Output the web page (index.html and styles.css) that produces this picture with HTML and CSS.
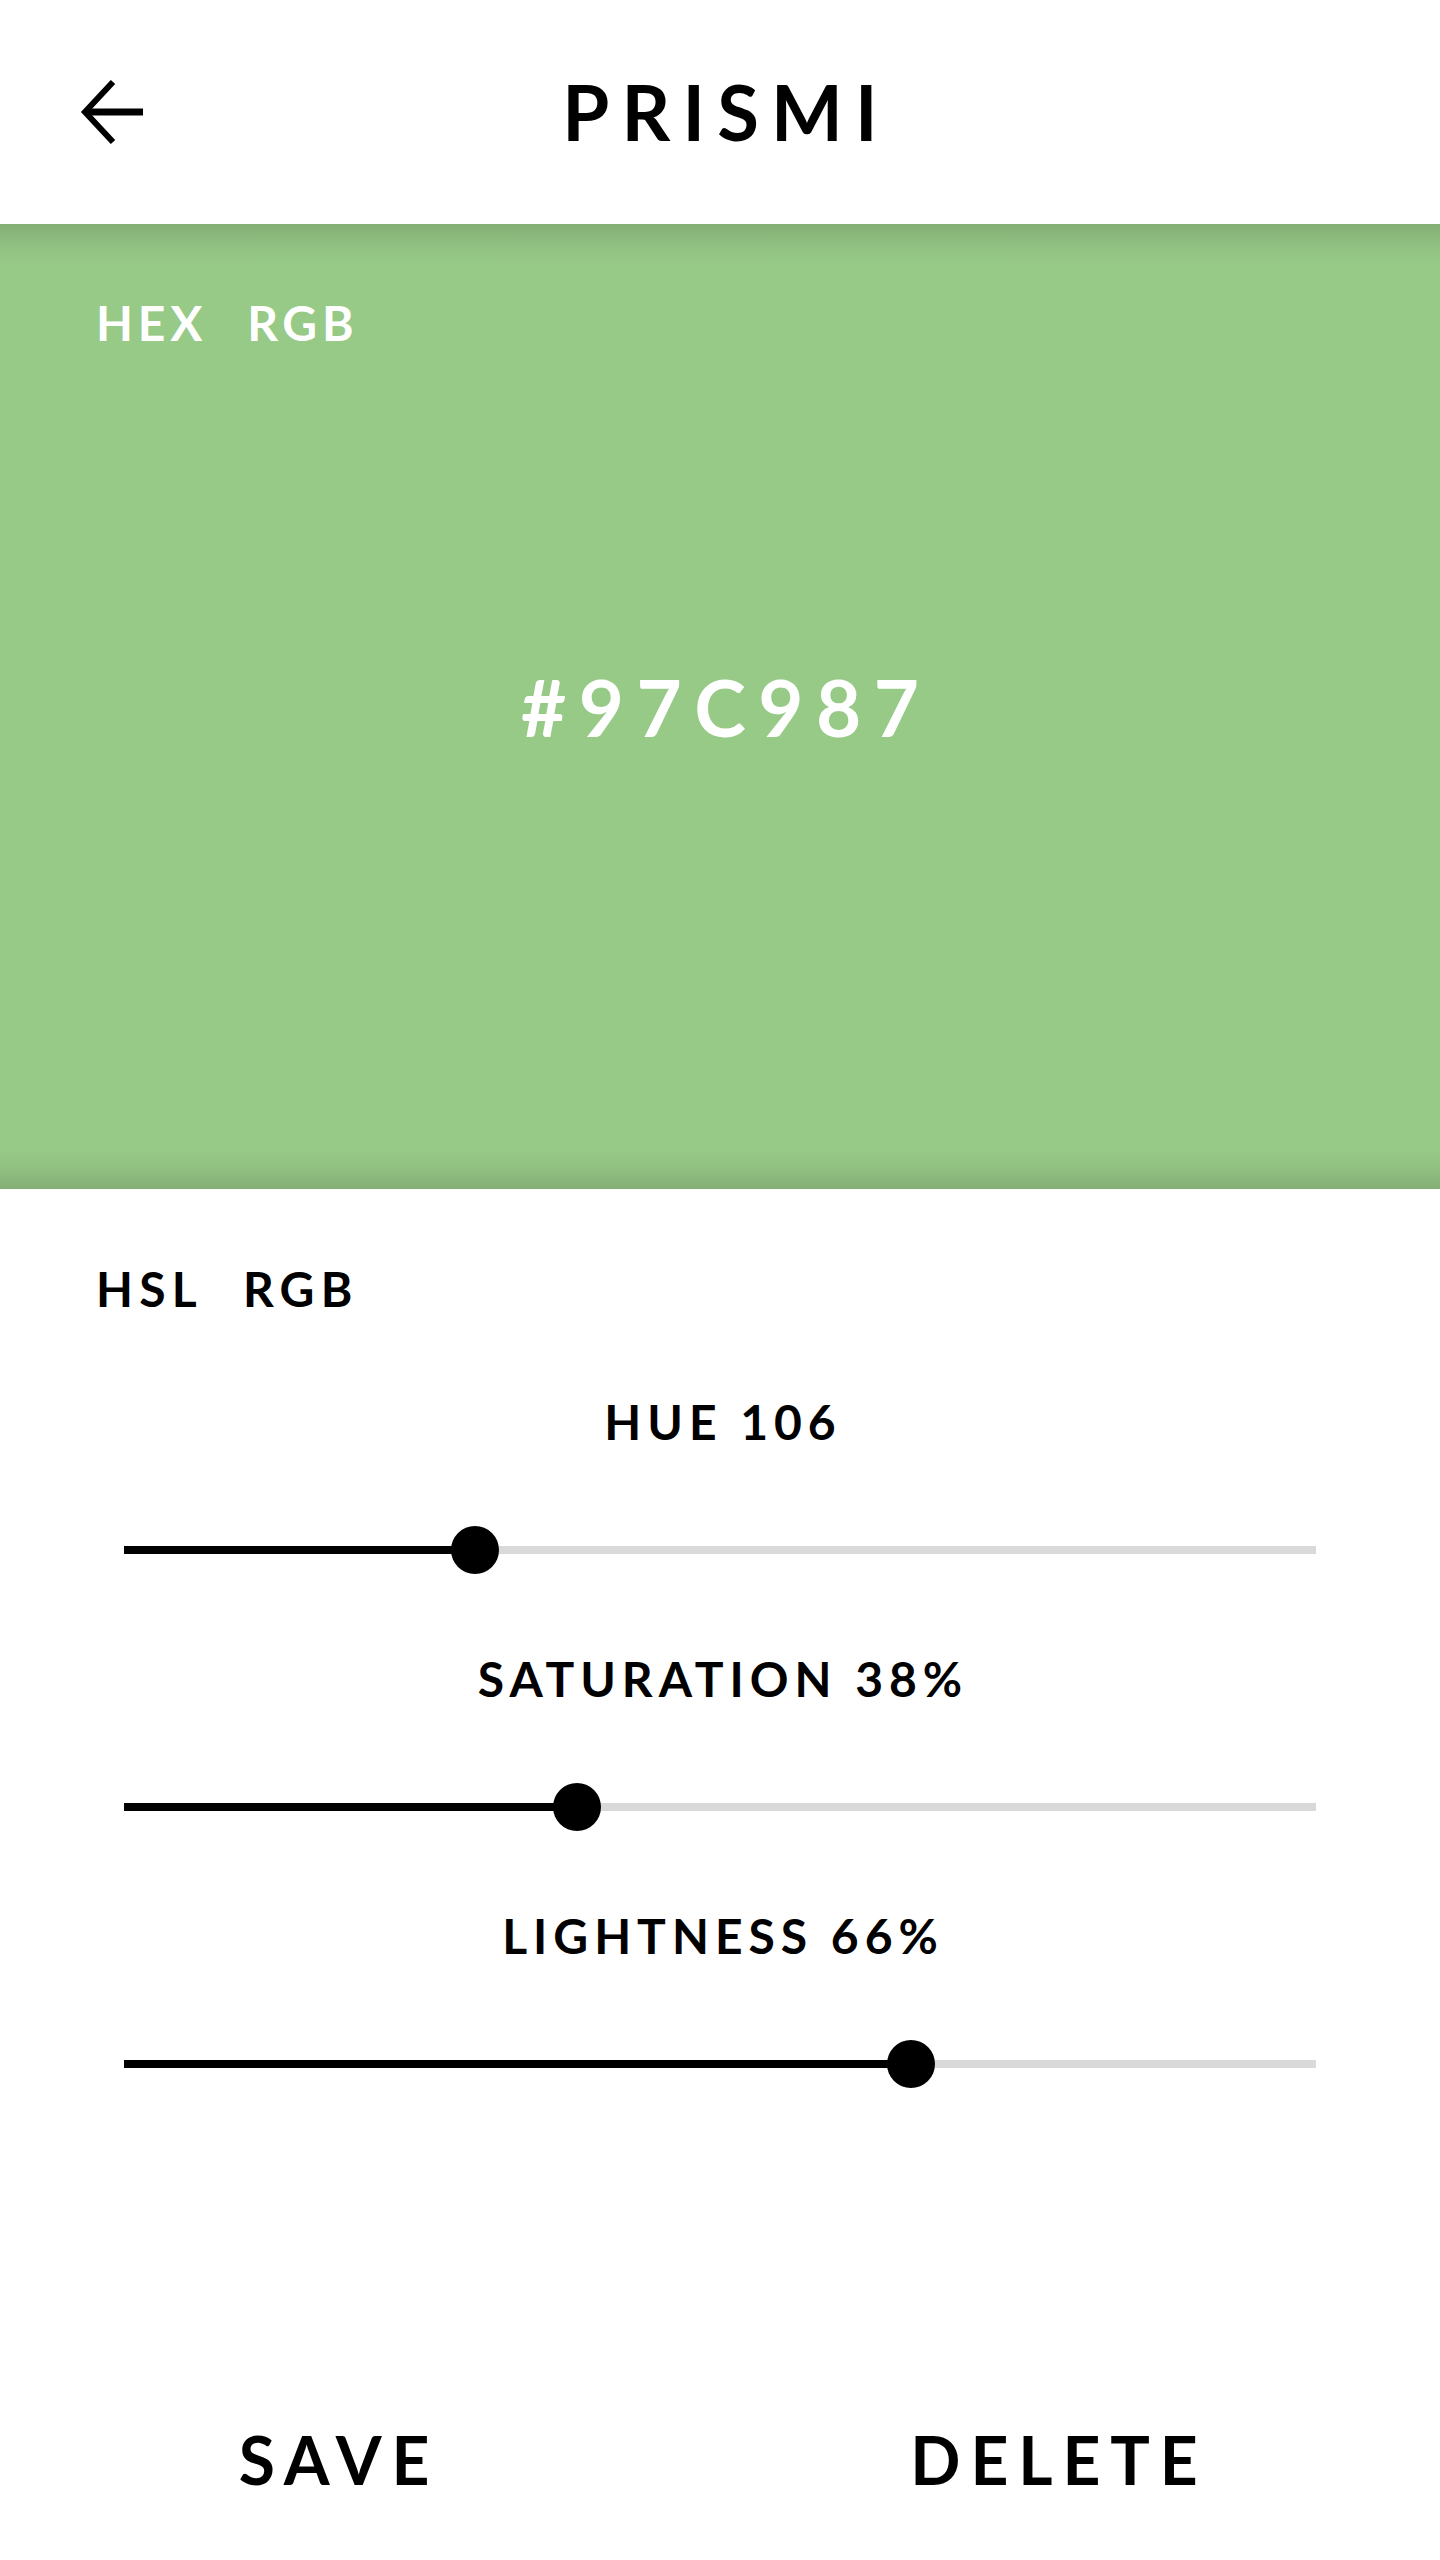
FILE: index.html
```html
<!DOCTYPE html>
<html lang="en">
<head>
<meta charset="utf-8">
<title>Prismi</title>
<link rel="stylesheet" href="styles.css">
</head>
<body>
<div class="app">
  <header class="topbar">
    <button class="back" aria-label="Back">
      <svg width="64" height="64" viewBox="0 0 64 64" fill="none" stroke="#000" stroke-width="7">
        <path d="M63 32 H6" />
        <path d="M33 2 L5 32 L33 62" stroke-width="6" />
      </svg>
    </button>
    <h1 class="title">PRISMI</h1>
    <span class="spacer"></span>
  </header>

  <section class="swatch">
    <nav class="tabs tabs-light">
      <span class="tab">HEX</span>
      <span class="tab">RGB</span>
    </nav>
    <div class="hex">#97C987</div>
  </section>

  <section class="controls">
    <nav class="tabs">
      <span class="tab">HSL</span>
      <span class="tab">RGB</span>
    </nav>
    <div class="sliders">
      <div class="slider">
        <div class="slider-label">HUE 106</div>
        <div class="rail">
          <div class="fill" style="width: 29.44%"></div>
          <div class="thumb"></div>
          <div class="rest"></div>
        </div>
      </div>
      <div class="slider">
        <div class="slider-label">SATURATION 38%</div>
        <div class="rail">
          <div class="fill" style="width: 38%"></div>
          <div class="thumb"></div>
          <div class="rest"></div>
        </div>
      </div>
      <div class="slider">
        <div class="slider-label">LIGHTNESS 66%</div>
        <div class="rail">
          <div class="fill" style="width: 66%"></div>
          <div class="thumb"></div>
          <div class="rest"></div>
        </div>
      </div>
    </div>
  </section>

  <footer class="actions">
    <button class="action">SAVE</button>
    <button class="action">DELETE</button>
  </footer>
</div>
</body>
</html>
```

FILE: styles.css
```css
* {
  box-sizing: border-box;
}

html, body {
  margin: 0;
  padding: 0;
  background: #fff;
}

body {
  font-family: "Lato", "Liberation Sans", sans-serif;
  color: #000;
}

.app {
  width: 1440px;
  min-height: 2560px;
  display: flex;
  flex-direction: column;
}

/* Header */
.topbar {
  height: 224px;
  display: grid;
  grid-template-columns: 1fr auto 1fr;
  align-items: center;
}

.back {
  justify-self: start;
  margin-left: 80px;
  padding: 0;
  border: 0;
  background: none;
  width: 64px;
  height: 64px;
  display: flex;
}

.title {
  margin: 0;
  font-size: 76px;
  line-height: 1;
  font-weight: 700;
  letter-spacing: 0.16em;
  margin-right: -0.16em;
}

/* Swatch */
.swatch {
  height: 965px;
  display: grid;
  grid-template-rows: 1fr;
  grid-template-columns: 1fr;
  background:
    linear-gradient(to bottom, rgba(0,0,0,0.13) 0, rgba(0,0,0,0.09) 10px, rgba(0,0,0,0.04) 22px, rgba(0,0,0,0) 40px),
    linear-gradient(to top, rgba(0,0,0,0.13) 0, rgba(0,0,0,0.09) 10px, rgba(0,0,0,0.04) 22px, rgba(0,0,0,0) 40px),
    #97c987;
  color: #fff;
}

.swatch > * {
  grid-area: 1 / 1;
}

.tabs {
  display: flex;
  gap: 40px;
  font-size: 48px;
  line-height: 1;
  font-weight: 700;
  letter-spacing: 0.1em;
  align-self: start;
}

.tab {
  min-width: 106px;
}

.swatch .tabs {
  padding: 75px 0 0 96px;
}

.hex {
  align-self: center;
  justify-self: center;
  font-size: 78px;
  line-height: 1;
  font-weight: 700;
  letter-spacing: 0.16em;
  margin-right: -0.16em;
}

/* Controls */
.controls {
  display: flex;
  flex-direction: column;
}

.controls .tabs {
  padding: 76px 0 0 96px;
}

.controls .tab {
  letter-spacing: 0.13em;
}

.sliders {
  display: flex;
  flex-direction: column;
  gap: 81px;
  padding: 85px 124px 0;
}

.slider {
  display: flex;
  flex-direction: column;
  gap: 80px;
}

.slider-label {
  text-align: center;
  font-size: 48px;
  line-height: 1;
  font-weight: 700;
  letter-spacing: 0.125em;
  margin-right: -0.125em;
}

.rail {
  height: 48px;
  display: flex;
  align-items: center;
}

.fill {
  height: 8px;
  background: #000;
  margin-right: -24px;
}

.thumb {
  width: 48px;
  height: 48px;
  border-radius: 50%;
  background: #000;
  flex: none;
  position: relative;
  z-index: 1;
}

.rest {
  flex: 1;
  height: 8px;
  background: #d9d9d9;
  margin-left: -24px;
}

/* Footer */
.actions {
  margin-top: auto;
  display: grid;
  grid-template-columns: 1fr 1fr;
  padding-bottom: 67px;
}

.action {
  border: 0;
  background: none;
  padding: 0 42px 0 0;
  font-family: "Lato", "Liberation Sans", sans-serif;
  font-size: 66px;
  line-height: 1;
  font-weight: 700;
  letter-spacing: 0.15em;
  color: #000;
  text-align: center;
}
```
